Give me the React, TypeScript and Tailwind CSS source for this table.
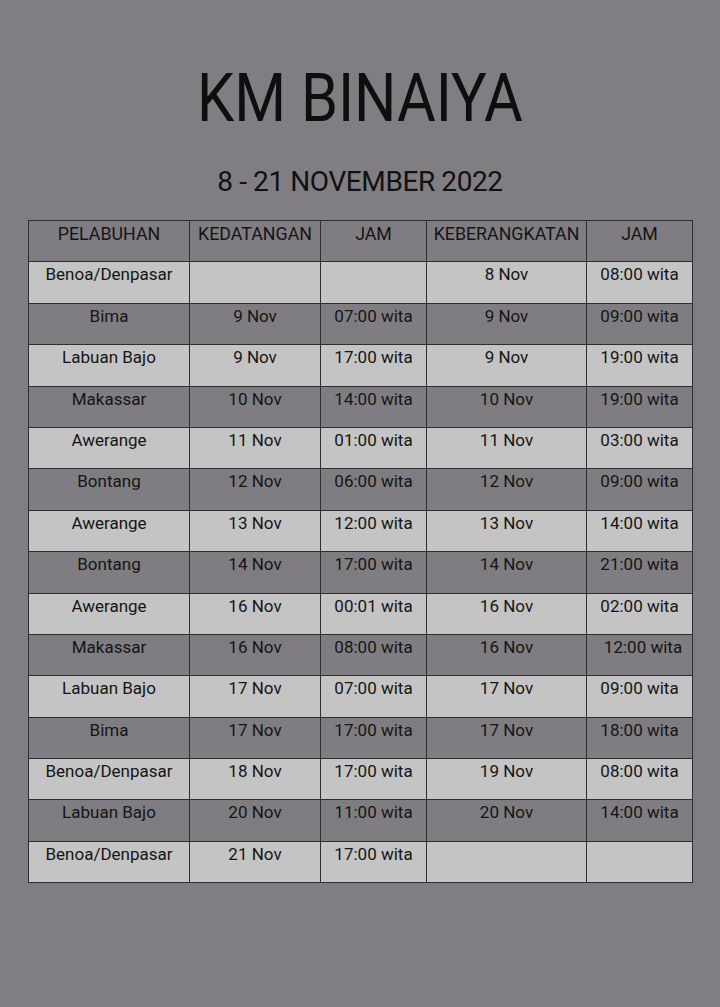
import React from 'react';

type Row = {
  port: string;
  arrive: string;
  arriveTime: string;
  depart: string;
  departTime: string;
  shift?: boolean;
};

const rows: Row[] = [
  { port: 'Benoa/Denpasar', arrive: '', arriveTime: '', depart: '8 Nov', departTime: '08:00 wita' },
  { port: 'Bima', arrive: '9 Nov', arriveTime: '07:00 wita', depart: '9 Nov', departTime: '09:00 wita' },
  { port: 'Labuan Bajo', arrive: '9 Nov', arriveTime: '17:00 wita', depart: '9 Nov', departTime: '19:00 wita' },
  { port: 'Makassar', arrive: '10 Nov', arriveTime: '14:00 wita', depart: '10 Nov', departTime: '19:00 wita' },
  { port: 'Awerange', arrive: '11 Nov', arriveTime: '01:00 wita', depart: '11 Nov', departTime: '03:00 wita' },
  { port: 'Bontang', arrive: '12 Nov', arriveTime: '06:00 wita', depart: '12 Nov', departTime: '09:00 wita' },
  { port: 'Awerange', arrive: '13 Nov', arriveTime: '12:00 wita', depart: '13 Nov', departTime: '14:00 wita' },
  { port: 'Bontang', arrive: '14 Nov', arriveTime: '17:00 wita', depart: '14 Nov', departTime: '21:00 wita' },
  { port: 'Awerange', arrive: '16 Nov', arriveTime: '00:01 wita', depart: '16 Nov', departTime: '02:00 wita' },
  { port: 'Makassar', arrive: '16 Nov', arriveTime: '08:00 wita', depart: '16 Nov', departTime: '12:00 wita', shift: true },
  { port: 'Labuan Bajo', arrive: '17 Nov', arriveTime: '07:00 wita', depart: '17 Nov', departTime: '09:00 wita' },
  { port: 'Bima', arrive: '17 Nov', arriveTime: '17:00 wita', depart: '17 Nov', departTime: '18:00 wita' },
  { port: 'Benoa/Denpasar', arrive: '18 Nov', arriveTime: '17:00 wita', depart: '19 Nov', departTime: '08:00 wita' },
  { port: 'Labuan Bajo', arrive: '20 Nov', arriveTime: '11:00 wita', depart: '20 Nov', departTime: '14:00 wita' },
  { port: 'Benoa/Denpasar', arrive: '21 Nov', arriveTime: '17:00 wita', depart: '', departTime: '' },
];

const headers = ['PELABUHAN', 'KEDATANGAN', 'JAM', 'KEBERANGKATAN', 'JAM'];

const cell = 'border border-[#2e2e30] h-[41.4px] p-0 align-top text-center leading-[24px]';

export default function App() {
  return (
    <div
      className="w-[720px] min-h-[1007px] bg-[#807e83] text-[#151515] pt-[66px]"
      style={{ fontFamily: 'Roboto, "Noto Sans", sans-serif' }}
    >
      {/* Titre */}
      <div className="text-center leading-none">
        <span className="inline-block text-[66px] leading-none scale-x-[0.9] text-[#0e0e0e]">
          KM BINAIYA
        </span>
      </div>
      <div className="text-center mt-[36px] text-[28px] leading-none tracking-[-0.4px] text-[#111]">
        8 - 21 NOVEMBER 2022
      </div>

      {/* Jadwal */}
      <table className="ml-[28px] mt-[24px] w-[664px] table-fixed border-collapse text-[17px]">
        <colgroup>
          <col className="w-[161px]" />
          <col className="w-[131px]" />
          <col className="w-[106px]" />
          <col className="w-[160px]" />
          <col className="w-[106px]" />
        </colgroup>
        <thead>
          <tr className="bg-[#7f7d82]">
            {headers.map((h, i) => (
              <th key={i} className={`${cell} font-normal text-[17.8px] pt-[1px]`}>
                {h}
              </th>
            ))}
          </tr>
        </thead>
        <tbody>
          {rows.map((r, i) => (
            <tr key={i} className={i % 2 === 0 ? 'bg-[#c4c4c4]' : 'bg-[#7f7d82]'}>
              <td className={cell}>{r.port}</td>
              <td className={cell}>{r.arrive}</td>
              <td className={cell}>{r.arriveTime}</td>
              <td className={cell}>{r.depart}</td>
              <td className={`${cell} ${r.shift ? 'pl-[7px]' : ''}`}>{r.departTime}</td>
            </tr>
          ))}
        </tbody>
      </table>
    </div>
  );
}
